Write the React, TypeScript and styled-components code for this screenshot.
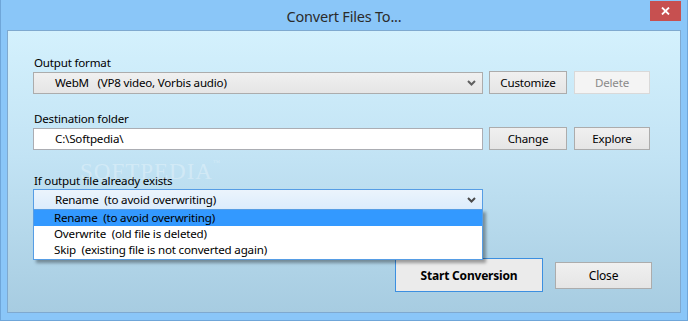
import React from 'react';
import styled, { createGlobalStyle } from 'styled-components';

const GlobalStyle = createGlobalStyle`
  html, body {
    margin: 0;
    padding: 0;
    background: #8ac6f8;
  }
  * { box-sizing: border-box; }
`;

const uiFont = `"Segoe UI", "Noto Sans", "Open Sans", sans-serif`;

const Window = styled.div`
  width: 688px;
  height: 321px;
  background: #8ac6f8;
  border: 1px solid #6fa6d9;
  border-top: none;
  display: flex;
  flex-direction: column;
  font-family: ${uiFont};
  font-size: 11.6px;
  letter-spacing: -0.2px;
  color: #000;
  overflow: hidden;
`;

const TitleBar = styled.div`
  height: 30px;
  flex: none;
  position: relative;
  display: flex;
  align-items: center;
  justify-content: center;
`;

const Title = styled.div`
  font-size: 14.5px;
  letter-spacing: -0.2px;
  color: #2b2b2b;
  padding-top: 1px;
`;

const CloseX = styled.div`
  position: absolute;
  top: 1px;
  right: 6px;
  width: 31px;
  height: 20px;
  background: #c75050;
  display: flex;
  align-items: center;
  justify-content: center;
`;

const Panel = styled.div`
  margin: 0 6px 7px 6px;
  flex: 1;
  border: 1px solid #7fa9cf;
  background: linear-gradient(#d4f1fd, #c2e3f4 45%, #a7cce1);
  padding: 24px 28px 0 25px;
  position: relative;
`;

const Label = styled.div<{ $gap?: number }>`
  height: 16px;
  line-height: 16px;
  margin-top: ${p => p.$gap ?? 0}px;
  padding-left: 1px;
`;

const Row = styled.div`
  display: grid;
  grid-template-columns: 450px 78px 77px;
  column-gap: 6px;
  align-items: center;
  & > :nth-child(3) { margin-left: 1px; }
`;

const Combo = styled.div<{ $open?: boolean; $h?: number }>`
  height: ${p => p.$h ?? 22}px;
  border: 1px solid ${p => (p.$open ? '#569de5' : '#acacac')};
  background: ${p =>
    p.$open
      ? 'linear-gradient(#ebf4fc, #dcecfc)'
      : 'linear-gradient(#f0f0f0, #e5e5e5)'};
  display: flex;
  align-items: center;
  padding-left: 21px;
  padding-right: 6px;
  position: relative;
`;

const ComboText = styled.span`
  flex: 1;
  white-space: pre;
`;

const TextBox = styled.div`
  height: 22px;
  border: 1px solid #abadb3;
  background: #fff;
  display: flex;
  align-items: center;
  padding-left: 21px;
`;

const Button = styled.div<{ $disabled?: boolean }>`
  height: 23px;
  border: 1px solid ${p => (p.$disabled ? '#d9d9d9' : '#acacac')};
  background: ${p => (p.$disabled ? '#f4f4f4' : 'linear-gradient(#f0f0f0, #e5e5e5)')};
  color: ${p => (p.$disabled ? '#8a8a8a' : '#000')};
  display: flex;
  align-items: center;
  justify-content: center;
`;

const DropList = styled.div`
  position: absolute;
  left: -1px;
  right: -1px;
  top: 100%;
  background: #fff;
  border: 1px solid #569de5;
  box-shadow: 3px 3px 3px rgba(0, 0, 0, 0.35);
  z-index: 5;
  padding-bottom: 1px;
`;

const Option = styled.div<{ $active?: boolean }>`
  height: 16px;
  line-height: 16px;
  padding-left: 20px;
  background: ${p => (p.$active ? '#3399ff' : 'transparent')};
  white-space: pre;
`;

const Footer = styled.div`
  margin-top: 48px;
  display: flex;
  justify-content: flex-end;
  align-items: center;
  gap: 12px;
`;

const BigButton = styled(Button)<{ $primary?: boolean }>`
  height: ${p => (p.$primary ? 34 : 27)}px;
  width: ${p => (p.$primary ? 148 : 97)}px;
  border-color: ${p => (p.$primary ? '#3c8fe0' : '#acacac')};
  background: ${p => (p.$primary ? '#ebebeb' : 'linear-gradient(#f0f0f0, #e5e5e5)')};
  font-weight: ${p => (p.$primary ? 700 : 400)};
  font-size: 12px;
`;

const Watermark = styled.div`
  position: absolute;
  left: 72px;
  top: 128px;
  font-family: "Liberation Serif", serif;
  font-size: 23px;
  letter-spacing: 1px;
  color: rgba(255, 255, 255, 0.3);
  pointer-events: none;
  sup {
    font-size: 7px;
    vertical-align: top;
  }
`;

const Chevron = ({ color }: { color: string }) => (
  <svg width="9" height="6" viewBox="0 0 9 6">
    <path d="M1 1 L4.5 4.5 L8 1" stroke={color} strokeWidth="2" fill="none" />
  </svg>
);

export default function App() {
  return (
    <>
      <GlobalStyle />
      <Window>
        <TitleBar>
          <Title>Convert Files To...</Title>
          <CloseX>
            <svg width="9" height="8" viewBox="0 0 9 8">
              <path d="M1 0.5 L8 7.5 M8 0.5 L1 7.5" stroke="#fff" strokeWidth="1.8" />
            </svg>
          </CloseX>
        </TitleBar>
        <Panel>
          <Watermark>
            SOFTPEDIA<sup>™</sup>
          </Watermark>
          <Label>Output format</Label>
          <Row>
            <Combo>
              <ComboText>WebM   (VP8 video, Vorbis audio)</ComboText>
              <Chevron color="#606060" />
            </Combo>
            <Button>Customize</Button>
            <Button $disabled>Delete</Button>
          </Row>
          <Label $gap={17}>Destination folder</Label>
          <Row>
            <TextBox>C:\Softpedia\</TextBox>
            <Button>Change</Button>
            <Button>Explore</Button>
          </Row>
          <Label $gap={23}>If output file already exists</Label>
          <Row>
            <Combo $open $h={21}>
              <ComboText>Rename  (to avoid overwriting)</ComboText>
              <Chevron color="#4a4a4a" />
              <DropList>
                <Option $active>Rename  (to avoid overwriting)</Option>
                <Option>Overwrite  (old file is deleted)</Option>
                <Option>Skip  (existing file is not converted again)</Option>
              </DropList>
            </Combo>
          </Row>
          <Footer>
            <BigButton $primary>Start Conversion</BigButton>
            <BigButton>Close</BigButton>
          </Footer>
        </Panel>
      </Window>
    </>
  );
}
